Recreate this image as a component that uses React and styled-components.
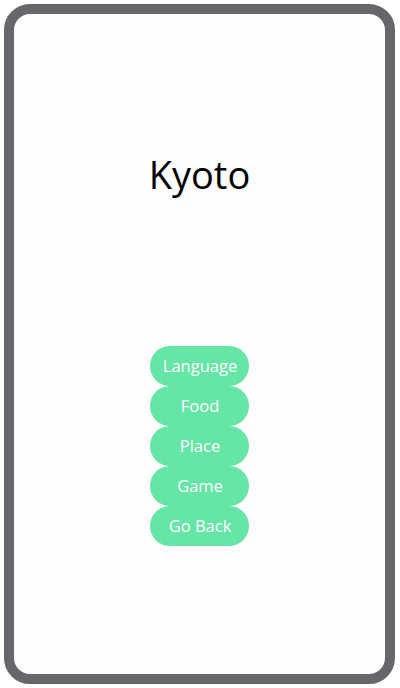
import React from 'react';
import styled, { createGlobalStyle } from 'styled-components';

const GlobalStyle = createGlobalStyle`
  html, body {
    margin: 0;
    padding: 0;
    background: #ffffff;
  }
  body {
    font-family: "Open Sans", "Noto Sans", sans-serif;
  }
`;

const items = ['Language', 'Food', 'Place', 'Game', 'Go Back'];

function App() {
  return (
    <>
      <GlobalStyle />
      <Page>
        <Frame>
          <Title>Kyoto</Title>
          <Menu>
            {items.map((label) => (
              <MenuButton key={label}>{label}</MenuButton>
            ))}
          </Menu>
        </Frame>
      </Page>
    </>
  );
}

const Page = styled.div`
  width: 400px;
  height: 688px;
  padding: 4px 5px 4px 4px;
  box-sizing: border-box;
`;

// 회색 테두리 프레임
const Frame = styled.div`
  height: 100%;
  box-sizing: border-box;
  border: 10px solid #67666b;
  border-radius: 26px;
  background-color: #fdfdfd;
  display: flex;
  flex-direction: column;
  align-items: center;
`;

const Title = styled.h1`
  margin: 133px 0 0;
  font-family: "Open Sans", "Noto Sans", sans-serif;
  font-weight: 400;
  font-size: 38px;
  line-height: 54px;
  color: #000000;
`;

const Menu = styled.div`
  margin-top: 145px;
  display: flex;
  flex-direction: column;
  align-items: center;
`;

const MenuButton = styled.button`
  width: 99px;
  height: 40px;
  border: none;
  border-radius: 20px;
  background-color: #66e6a6;
  color: #ffffff;
  font-family: "Open Sans", "Noto Sans", sans-serif;
  font-size: 16.5px;
  line-height: 40px;
  padding: 0 0 0 1px;
  cursor: pointer;
`;

export default App;
